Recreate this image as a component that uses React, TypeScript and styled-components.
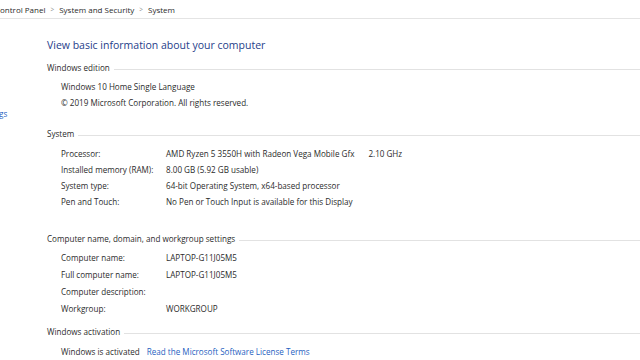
import * as React from 'react';
import styled, { createGlobalStyle } from 'styled-components';

const GlobalStyle = createGlobalStyle`
  html, body {
    margin: 0;
    padding: 0;
    background: #fff;
  }
  body {
    font-family: "Open Sans", "Noto Sans", "Liberation Sans", sans-serif;
    font-size: 8.1px;
    color: #2b2b2b;
  }
`;

const Page = styled.div`
  width: 640px;
  height: 360px;
  overflow: hidden;
  display: flex;
  flex-direction: column;
`;

const AddressBar = styled.div`
  height: 18px;
  flex-shrink: 0;
  border-bottom: 1px solid #e4e4e4;
  display: flex;
  align-items: center;
  overflow: hidden;
  white-space: nowrap;
  font-size: 8px;
`;

const Crumbs = styled.div`
  display: flex;
  align-items: center;
  margin-left: -5px;
  color: #2b2b2b;
`;

const Chevron = styled.span`
  color: #8a8a8a;
  font-size: 6.5px;
  margin: 0 5px;
`;

const Body = styled.div`
  flex: 1;
  display: flex;
  min-height: 0;
`;

const Nav = styled.div`
  width: 47px;
  flex-shrink: 0;
  overflow: hidden;
`;

const NavList = styled.div`
  margin-left: -90px;
  padding-top: 3px;
  display: flex;
  flex-direction: column;
  white-space: nowrap;
`;

const NavLink = styled.a<{ $gap?: number }>`
  color: #1f5fbf;
  line-height: 16px;
  margin-top: ${p => p.$gap ?? 4}px;
  text-decoration: none;
`;

const Main = styled.div`
  flex: 1;
  padding-top: 18px;
  display: flex;
  flex-direction: column;
`;

const Heading = styled.h1`
  margin: 0 0 7px;
  font-size: 10.5px;
  font-weight: 400;
  line-height: 16px;
  color: #26408a;
`;

const SectionTitle = styled.div<{ $top?: number }>`
  display: flex;
  align-items: center;
  line-height: 16px;
  margin-top: ${p => p.$top ?? 0}px;
  color: #2b2b2b;
  &::after {
    content: '';
    flex: 1;
    height: 1px;
    margin-left: 4px;
    margin-top: 2px;
    background: #e2e2e2;
  }
`;

const Rows = styled.div<{ $top: number }>`
  margin-top: ${p => p.$top}px;
  padding-left: 14px;
  display: flex;
  flex-direction: column;
`;

const Row = styled.div<{ $h?: number }>`
  display: flex;
  align-items: center;
  height: ${p => p.$h ?? 16}px;
  white-space: nowrap;
`;

const Label = styled.span`
  width: 105px;
  flex-shrink: 0;
`;

const Extra = styled.span`
  margin-left: 14px;
`;

const Link = styled.a`
  color: #1f5fbf;
  text-decoration: none;
  margin-left: 7px;
`;

type Info = [string, string];

const system: Info[] = [
  ['Installed memory (RAM):', '8.00 GB (5.92 GB usable)'],
  ['System type:', '64-bit Operating System, x64-based processor'],
  ['Pen and Touch:', 'No Pen or Touch Input is available for this Display'],
];

const computer: Info[] = [
  ['Computer name:', 'LAPTOP-G11J05M5'],
  ['Full computer name:', 'LAPTOP-G11J05M5'],
  ['Computer description:', ''],
  ['Workgroup:', 'WORKGROUP'],
];

export default function App() {
  return (
    <Page>
      <GlobalStyle />
      <AddressBar>
        <Crumbs>
          <span>Control Panel</span>
          <Chevron>&gt;</Chevron>
          <span>System and Security</span>
          <Chevron>&gt;</Chevron>
          <span>System</span>
        </Crumbs>
      </AddressBar>
      <Body>
        <Nav>
          <NavList>
            <NavLink $gap={0}>Control Panel Home</NavLink>
            <NavLink $gap={8}>Device Manager</NavLink>
            <NavLink>Remote settings</NavLink>
            <NavLink>System protection</NavLink>
            <NavLink>Advanced system settings</NavLink>
          </NavList>
        </Nav>
        <Main>
          <Heading>View basic information about your computer</Heading>

          <SectionTitle>Windows edition</SectionTitle>
          <Rows $top={2}>
            <Row>Windows 10 Home Single Language</Row>
            <Row>© 2019 Microsoft Corporation. All rights reserved.</Row>
          </Rows>

          <SectionTitle $top={16}>System</SectionTitle>
          <Rows $top={3}>
            <Row>
              <Label>Processor:</Label>
              <span>AMD Ryzen 5 3550H with Radeon Vega Mobile Gfx</span>
              <Extra>2.10 GHz</Extra>
            </Row>
            {system.map(([k, v]) => (
              <Row key={k}>
                <Label>{k}</Label>
                <span>{v}</span>
              </Row>
            ))}
          </Rows>

          <SectionTitle $top={22}>Computer name, domain, and workgroup settings</SectionTitle>
          <Rows $top={2}>
            {computer.map(([k, v]) => (
              <Row key={k} $h={17}>
                <Label>{k}</Label>
                <span>{v}</span>
              </Row>
            ))}
          </Rows>

          <SectionTitle $top={7}>Windows activation</SectionTitle>
          <Rows $top={3}>
            <Row>
              <span>Windows is activated</span>
              <Link>Read the Microsoft Software License Terms</Link>
            </Row>
          </Rows>
        </Main>
      </Body>
    </Page>
  );
}
